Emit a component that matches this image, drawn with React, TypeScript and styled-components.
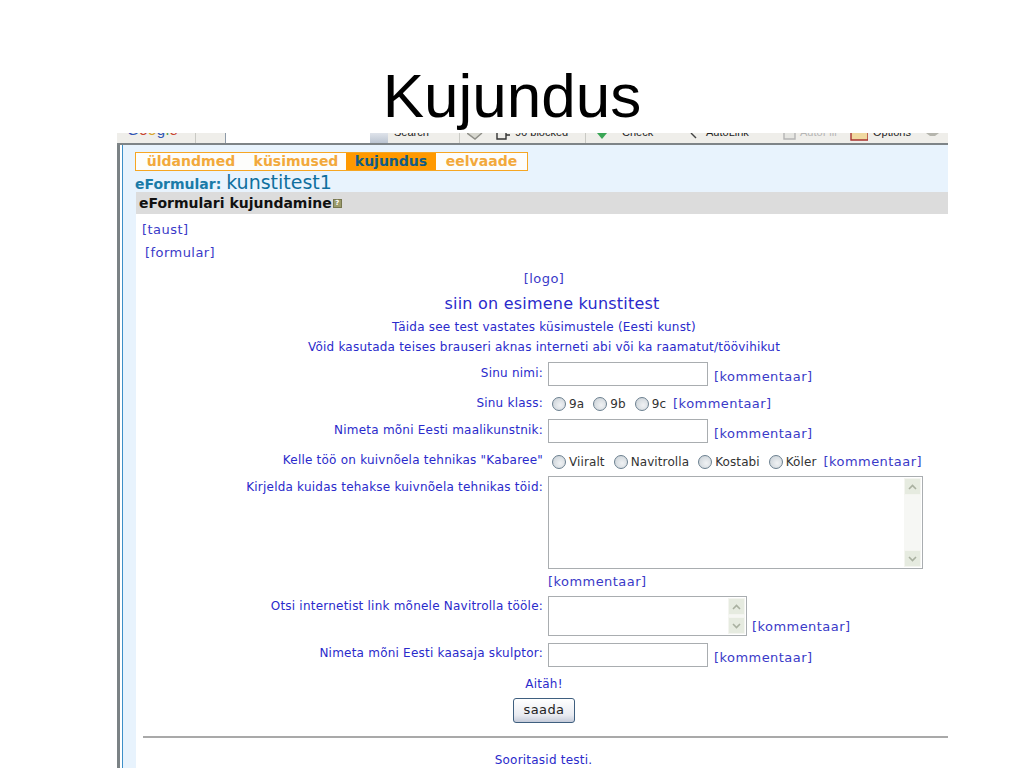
import styled, { createGlobalStyle } from "styled-components";

const GlobalStyle = createGlobalStyle`
  html, body {
    margin: 0;
    padding: 0;
    background: #fff;
    overflow: hidden;
  }
  body {
    width: 1024px;
    height: 768px;
    font-family: "DejaVu Sans", Verdana, sans-serif;
  }
`;

const Slide = styled.div`
  width: 1024px;
  height: 768px;
  overflow: hidden;
  display: flex;
  flex-direction: column;
  align-items: center;
`;

const Title = styled.h1`
  margin: 0;
  height: 133px;
  flex: none;
  padding-top: 60px;
  box-sizing: border-box;
  font: 400 62px/72px "Liberation Sans", Arial, sans-serif;
  color: #000;
`;

const Shot = styled.div`
  align-self: flex-start;
  width: 831px;
  height: 635px;
  margin-left: 117px;
  display: flex;
  flex-direction: column;
  overflow: hidden;
`;

/* the slide crops the browser toolbar, only the bottom of its row is visible */
const Toolbar = styled.div`
  height: 10px;
  flex: none;
  display: flex;
  align-items: flex-start;
  background: #efeeea;
  border-bottom: 2px solid #7e8487;
  font: 11px/12px "Liberation Sans", Arial, sans-serif;
  color: #222;
  overflow: hidden;
  white-space: nowrap;
`;

const ToolCell = styled.div<{ $w: number; $pad?: number; $line?: boolean; $muted?: boolean }>`
  flex: none;
  box-sizing: border-box;
  width: ${(p) => p.$w}px;
  height: 10px;
  padding-left: ${(p) => p.$pad ?? 0}px;
  border-left: ${(p) => (p.$line ? "1px solid #c9c9c4" : "0")};
  color: ${(p) => (p.$muted ? "#b5b5b5" : "inherit")};
`;

const ToolText = styled.div`
  margin-top: -7px;
`;

const ToolInput = styled.div`
  flex: none;
  width: 145px;
  height: 10px;
  background: #fff;
  border-left: 1px solid #8d9aa8;
  box-sizing: border-box;
`;

const ToolButton = styled.div`
  flex: none;
  width: 18px;
  height: 10px;
  background: linear-gradient(#dfe3ea, #bcc5d2);
`;

const GoogleWord = styled.div`
  font-size: 15px;
  letter-spacing: 0.5px;
  line-height: 12px;
  margin-top: -9px;
`;

const GoogleLetter = styled.span<{ $c: string }>`
  color: ${(p) => p.$c};
`;

const Body = styled.div`
  flex: 1;
  display: flex;
  min-height: 0;
  border-left: 3px solid #7b8285;
`;

const Side = styled.div`
  flex: none;
  width: 12px;
  margin-left: 2px;
  background: #e8f3fd;
  border-left: 1px solid #3d8fc8;
`;

const Gutter = styled.div`
  flex: 1;
  display: flex;
  min-width: 0;
  background: #e4ecef;
`;

const Main = styled.div`
  flex: 1;
  display: flex;
  flex-direction: column;
  min-width: 0;
  background: #e8f3fd;
`;

const Tabs = styled.div`
  display: flex;
  align-self: flex-start;
  width: 393px;
  height: 19px;
  margin: 7px 0 0 0;
  box-sizing: border-box;
  border: 1px solid #f6a623;
  background: #fdfdfb;
  font-weight: 700;
  font-size: 14px;
  line-height: 17px;
`;

const Tab = styled.div<{ $active?: boolean; $w: number }>`
  width: ${(p) => p.$w}px;
  text-align: center;
  background: ${(p) => (p.$active ? "#ff9900" : "transparent")};
  color: ${(p) => (p.$active ? "#0f5c86" : "#f2a93b")};
`;

const FormName = styled.div`
  height: 21px;
  flex: none;
  color: #1a7ba8;
  font-size: 14px;
  line-height: 22px;
  font-weight: 700;
  white-space: nowrap;
`;

const FormTitle = styled.span`
  font-size: 19px;
  font-weight: 400;
  color: #0f6f9e;
`;

const Panel = styled.div`
  flex: 1;
  background: #fff;
  margin-left: 1px;
  display: flex;
  flex-direction: column;
  min-height: 0;
  font-size: 12px;
  letter-spacing: 0.22px;
  color: #2a2acb;
`;

const Heading = styled.div`
  height: 22px;
  flex: none;
  display: flex;
  align-items: center;
  gap: 1px;
  margin-bottom: 3px;
  background: #dcdcdc;
  color: #111;
  font-size: 14px;
  font-weight: 700;
  letter-spacing: 0;
  padding-left: 3px;
`;

const HelpIcon = styled.span`
  width: 7px;
  height: 7px;
  background: #9b9b6b;
  border: 1px solid #77774f;
  color: #fff;
  font-size: 7px;
  line-height: 7px;
  text-align: center;
  font-weight: 700;
`;

const LinkText = styled.a`
  color: #3a3ac8;
  font-size: 13px;
  letter-spacing: 0.45px;
  white-space: nowrap;
`;

const LinkLine = styled.div<{ $indent: number; $h: number }>`
  height: ${(p) => p.$h}px;
  flex: none;
  padding-left: ${(p) => p.$indent}px;
  display: flex;
  align-items: center;
`;

const Center = styled.div<{ $h: number; $size?: number; $shift?: number; $after?: number }>`
  height: ${(p) => p.$h}px;
  flex: none;
  display: flex;
  align-items: center;
  justify-content: center;
  margin-bottom: ${(p) => p.$after ?? 0}px;
  padding-left: ${(p) => p.$shift ?? 0}px;
  font-size: ${(p) => p.$size ?? 12}px;
  white-space: nowrap;
`;

const Row = styled.div<{ $h: number }>`
  display: grid;
  grid-template-columns: 407px 1fr;
  column-gap: 5px;
  height: ${(p) => p.$h}px;
  flex: none;
`;

const Label = styled.div<{ $top?: number }>`
  text-align: right;
  white-space: nowrap;
  padding-top: ${(p) => p.$top ?? 0}px;
  line-height: 15px;
`;

const Controls = styled.div`
  display: flex;
  align-items: flex-start;
  white-space: nowrap;
`;

const TextField = styled.div`
  width: 160px;
  height: 24px;
  box-sizing: border-box;
  border: 1px solid #a9adb0;
  background: #fff;
  flex: none;
  margin-right: 6px;
`;

const FieldLink = styled(LinkText)<{ $top?: number; $gap?: number }>`
  line-height: 15px;
  padding-top: ${(p) => p.$top ?? 7}px;
  margin-left: ${(p) => p.$gap ?? 0}px;
`;

const Area = styled.div<{ $w: number; $h: number }>`
  width: ${(p) => p.$w}px;
  height: ${(p) => p.$h}px;
  box-sizing: border-box;
  border: 1px solid #a9adb0;
  padding: 1px;
  background: #fff;
  flex: none;
  display: flex;
  justify-content: flex-end;
`;

const ScrollBar = styled.div`
  width: 17px;
  background: #f6f7f4;
  display: flex;
  flex-direction: column;
  justify-content: space-between;
`;

const ScrollButton = styled.div`
  height: 17px;
  background: #e6ebe0;
  border: 1px solid #f4f5f0;
  box-sizing: border-box;
  display: flex;
  align-items: center;
  justify-content: center;
`;

const Radio = styled.span`
  width: 14px;
  height: 14px;
  flex: none;
  box-sizing: border-box;
  border: 1px solid #6b7f8f;
  border-radius: 50%;
  background: radial-gradient(circle at 60% 60%, #f0f2f4, #c6ced4);
  margin-right: 3px;
`;

const Option = styled.label`
  display: flex;
  align-items: center;
  color: #333;
  font-size: 12px;
  letter-spacing: 0.1px;
  margin-right: 9px;
  &:last-child {
    margin-right: 7px;
  }
`;

const Options = styled.div<{ $top: number }>`
  display: flex;
  align-items: center;
  height: 15px;
  margin-top: ${(p) => p.$top}px;
  padding-left: 4px;
`;

const OptionLink = styled(LinkText)<{ $top: number }>`
  line-height: 15px;
  margin-top: ${(p) => p.$top}px;
`;

const SendButton = styled.div`
  width: 62px;
  height: 25px;
  box-sizing: border-box;
  border: 1px solid #3f5f7f;
  border-radius: 3px;
  background: linear-gradient(#fff, #e9ebf1 70%, #c5cbd9);
  color: #222;
  font-size: 13px;
  letter-spacing: 0.4px;
  line-height: 22px;
  text-align: center;
`;

const Rule = styled.hr`
  margin: 10px 0 0 7px;
  border: 0;
  height: 2px;
  background: #a9a9a9;
  flex: none;
`;

const Chevron = ({ down }: { down?: boolean }) => (
  <svg width="9" height="6" viewBox="0 0 9 6">
    <path
      d={down ? "M1 1l3.5 3.5L8 1" : "M1 5l3.5-3.5L8 5"}
      fill="none"
      stroke="#a9b0a0"
      strokeWidth="1.6"
    />
  </svg>
);

const Scroll = () => (
  <ScrollBar>
    <ScrollButton>
      <Chevron />
    </ScrollButton>
    <ScrollButton>
      <Chevron down />
    </ScrollButton>
  </ScrollBar>
);

const ToolIcon = ({ d, fill, stroke }: { d: string; fill?: string; stroke?: string }) => (
  <svg width="18" height="10" viewBox="0 0 18 10">
    <path d={d} fill={fill ?? "none"} stroke={stroke ?? "none"} strokeWidth="1.4" />
  </svg>
);

const App = () => {
  return (
    <Slide>
      <GlobalStyle />
      <Title>Kujundus</Title>
      <Shot>
        <Toolbar>
          <ToolCell $w={78} $pad={10}>
            <GoogleWord>
              <GoogleLetter $c="#2f55b5">G</GoogleLetter>
              <GoogleLetter $c="#c9442f">o</GoogleLetter>
              <GoogleLetter $c="#d9a62a">o</GoogleLetter>
              <GoogleLetter $c="#2f55b5">g</GoogleLetter>
              <GoogleLetter $c="#4a9a45">l</GoogleLetter>
              <GoogleLetter $c="#c9442f">e</GoogleLetter>
            </GoogleWord>
          </ToolCell>
          <ToolCell $w={30} $line />
          <ToolInput />
          <ToolButton />
          <ToolCell $w={71} $pad={6}>
            <ToolText>Search</ToolText>
          </ToolCell>
          <ToolCell $w={37} $line $pad={7}>
            <ToolIcon d="M0 0l8 6 7-6" fill="#d8d8d0" stroke="#8f8f88" />
          </ToolCell>
          <ToolCell $w={19}>
            <ToolIcon d="M1 0v6h9V0M10 2h4" stroke="#333" />
          </ToolCell>
          <ToolCell $w={70}>
            <ToolText>96 blocked</ToolText>
          </ToolCell>
          <ToolCell $w={37} $line $pad={11}>
            <ToolIcon d="M0 0h10L5 6z" fill="#3aa655" />
          </ToolCell>
          <ToolCell $w={68}>
            <ToolText>Check</ToolText>
          </ToolCell>
          <ToolCell $w={16}>
            <ToolIcon d="M1 0l5 5" stroke="#444" />
          </ToolCell>
          <ToolCell $w={77}>
            <ToolText>AutoLink</ToolText>
          </ToolCell>
          <ToolCell $w={17}>
            <ToolIcon d="M1 0v6h11V0" fill="#e6e6e2" stroke="#b5b5b5" />
          </ToolCell>
          <ToolCell $w={50} $muted>
            <ToolText>AutoFill</ToolText>
          </ToolCell>
          <ToolCell $w={23}>
            <ToolIcon d="M1 0v7h17V0" fill="#f0d9a0" stroke="#a8332f" />
          </ToolCell>
          <ToolCell $w={52}>
            <ToolText>Options</ToolText>
          </ToolCell>
          <ToolCell $w={23}>
            <ToolIcon d="M1 0h13l-4 3H5z" fill="#b5b5ad" />
          </ToolCell>
        </Toolbar>
        <Body>
          <Side />
          <Gutter>
            <Main>
              <Tabs>
                <Tab $w={110}>üldandmed</Tab>
                <Tab $w={100}>küsimused</Tab>
                <Tab $active $w={90}>
                  kujundus
                </Tab>
                <Tab $w={91}>eelvaade</Tab>
              </Tabs>
              <FormName>
                eFormular: <FormTitle>kunstitest1</FormTitle>
              </FormName>
              <Panel>
                <Heading>
                  eFormulari kujundamine
                  <HelpIcon>?</HelpIcon>
                </Heading>
                <LinkLine $indent={6} $h={24}>
                  <LinkText>[taust]</LinkText>
                </LinkLine>
                <LinkLine $indent={9} $h={22}>
                  <LinkText>[formular]</LinkText>
                </LinkLine>
                <Center $h={30} $shift={4}>
                  <LinkText>[logo]</LinkText>
                </Center>
                <Center $h={20} $size={16} $shift={20}>
                  siin on esimene kunstitest
                </Center>
                <Center $h={27} $shift={4}>
                  Täida see test vastates küsimustele (Eesti kunst)
                </Center>
                <Center $h={14} $shift={4} $after={8}>
                  Võid kasutada teises brauseri aknas interneti abi või ka raamatut/töövihikut
                </Center>
                <Row $h={30}>
                  <Label $top={4}>Sinu nimi:</Label>
                  <Controls>
                    <TextField />
                    <FieldLink>[kommentaar]</FieldLink>
                  </Controls>
                </Row>
                <Row $h={27}>
                  <Label $top={4}>Sinu klass:</Label>
                  <Controls>
                    <Options $top={4}>
                      <Option>
                        <Radio />9a
                      </Option>
                      <Option>
                        <Radio />9b
                      </Option>
                      <Option>
                        <Radio />9c
                      </Option>
                    </Options>
                    <OptionLink $top={4}>[kommentaar]</OptionLink>
                  </Controls>
                </Row>
                <Row $h={32}>
                  <Label $top={4}>Nimeta mõni Eesti maalikunstnik:</Label>
                  <Controls>
                    <TextField />
                    <FieldLink>[kommentaar]</FieldLink>
                  </Controls>
                </Row>
                <Row $h={25}>
                  <Label $top={2}>Kelle töö on kuivnõela tehnikas "Kabaree"</Label>
                  <Controls>
                    <Options $top={3}>
                      <Option>
                        <Radio />Viiralt
                      </Option>
                      <Option>
                        <Radio />Navitrolla
                      </Option>
                      <Option>
                        <Radio />Kostabi
                      </Option>
                      <Option>
                        <Radio />Köler
                      </Option>
                    </Options>
                    <OptionLink $top={3}>[kommentaar]</OptionLink>
                  </Controls>
                </Row>
                <Row $h={93}>
                  <Label $top={4}>Kirjelda kuidas tehakse kuivnõela tehnikas töid:</Label>
                  <Controls>
                    <Area $w={375} $h={93}>
                      <Scroll />
                    </Area>
                  </Controls>
                </Row>
                <Row $h={27}>
                  <div />
                  <Controls>
                    <FieldLink $top={5}>[kommentaar]</FieldLink>
                  </Controls>
                </Row>
                <Row $h={47}>
                  <Label $top={3}>Otsi internetist link mõnele Navitrolla tööle:</Label>
                  <Controls>
                    <Area $w={199} $h={40}>
                      <Scroll />
                    </Area>
                    <FieldLink $top={23} $gap={5}>
                      [kommentaar]
                    </FieldLink>
                  </Controls>
                </Row>
                <Row $h={31}>
                  <Label $top={3}>Nimeta mõni Eesti kaasaja skulptor:</Label>
                  <Controls>
                    <TextField />
                    <FieldLink>[kommentaar]</FieldLink>
                  </Controls>
                </Row>
                <Center $h={20} $shift={4}>
                  Aitäh!
                </Center>
                <Center $h={32} $shift={4}>
                  <SendButton>saada</SendButton>
                </Center>
                <Rule />
                <Center $h={44} $shift={3}>
                  Sooritasid testi.
                </Center>
              </Panel>
            </Main>
          </Gutter>
        </Body>
      </Shot>
    </Slide>
  );
};

export default App;
